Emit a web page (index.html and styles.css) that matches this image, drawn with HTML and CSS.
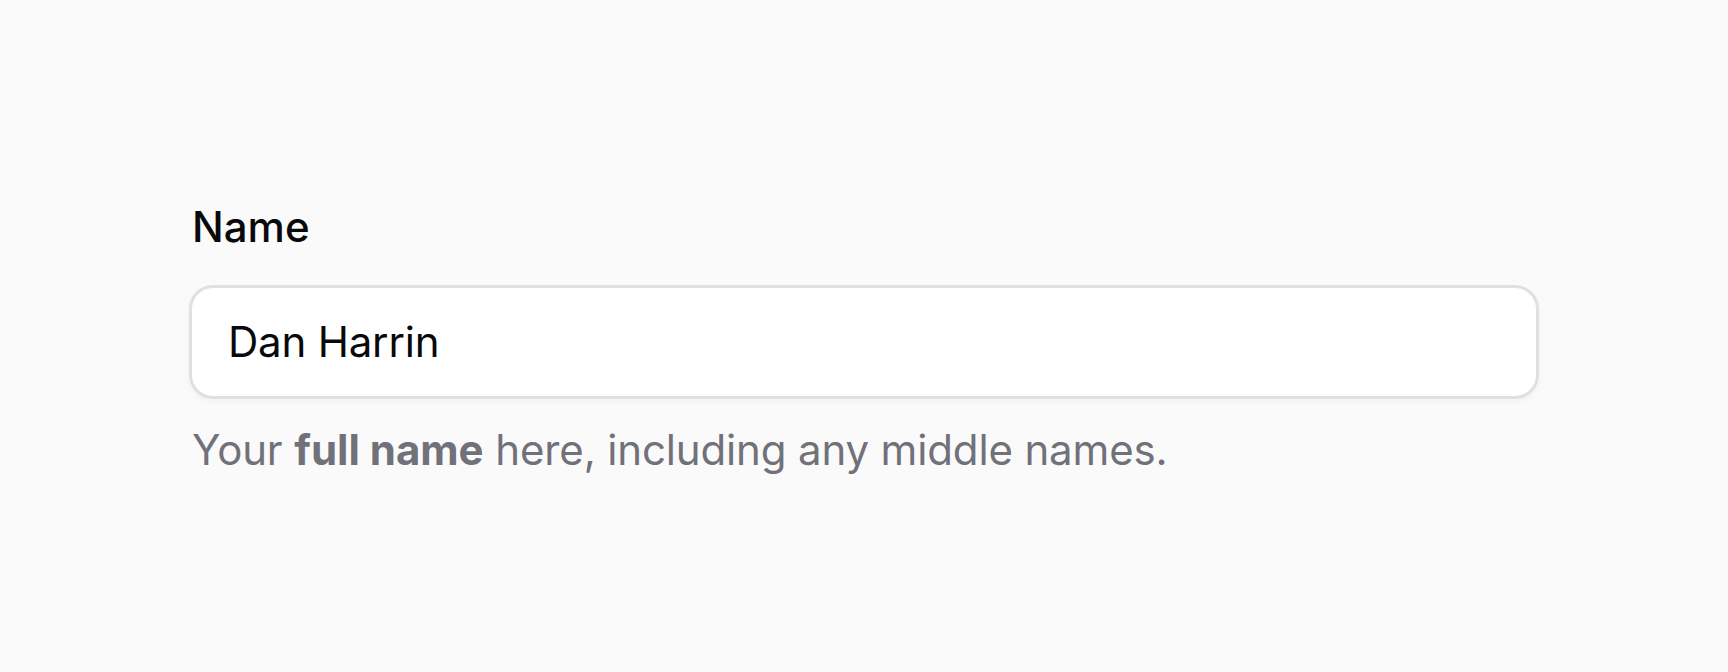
FILE: index.html
```html
<!DOCTYPE html>
<html lang="en">
<head>
<meta charset="utf-8">
<title>Name field</title>
<link rel="stylesheet" href="styles.css">
</head>
<body>
<main class="page">
  <div class="field">
    <label class="field-label" for="name">Name</label>
    <div class="input-wrap">
      <input class="input" id="name" type="text" value="Dan Harrin">
    </div>
    <p class="helper">Your <strong>full name</strong> here, including any middle names.</p>
  </div>
</main>
</body>
</html>
```

FILE: styles.css
```css
html, body {
  margin: 0;
  padding: 0;
  background: #fafafa;
}

body {
  font-family: Inter, "Noto Sans", "Liberation Sans", sans-serif;
  color: #09090b;
  -webkit-font-smoothing: antialiased;
}

.page {
  padding: 191px 189px 0;
}

.field {
  display: flex;
  flex-direction: column;
  gap: 22px;
}

.field-label {
  font-size: 42px;
  line-height: 72px;
  font-weight: 500;
  padding-left: 3px;
  color: #09090b;
}

.input-wrap {
  background: #ffffff;
  border: 3px solid #e0e0e2;
  border-radius: 24px;
  box-shadow: 0 3px 6px rgba(0, 0, 0, 0.035);
  height: 108px;
  box-sizing: content-box;
  display: flex;
  align-items: center;
}

.input {
  flex: 1;
  border: 0;
  outline: none;
  background: transparent;
  font-family: inherit;
  font-size: 42px;
  line-height: 72px;
  letter-spacing: -0.2px;
  color: #09090b;
  padding: 0 36px;
  margin: 0;
  height: 72px;
}

.helper {
  margin: -1px 0 0;
  padding-left: 3px;
  font-size: 42px;
  line-height: 60px;
  letter-spacing: -0.15px;
  color: #71717a;
}

.helper strong {
  font-weight: 700;
  letter-spacing: 0;
}
```
